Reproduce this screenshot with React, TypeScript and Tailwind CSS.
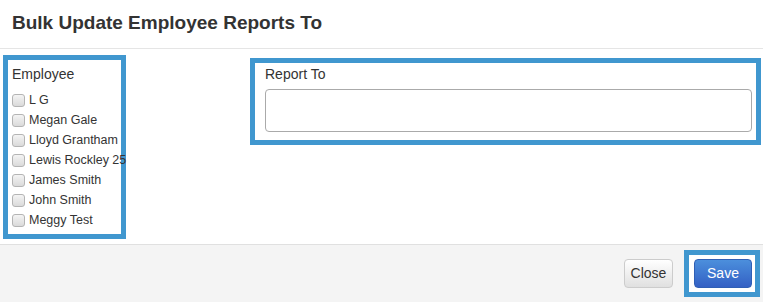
const employees = [
  "L G",
  "Megan Gale",
  "Lloyd Grantham",
  "Lewis Rockley 25",
  "James Smith",
  "John Smith",
  "Meggy Test",
];

function Check() {
  return (
    <span className="inline-block w-[13px] h-[13px] shrink-0 rounded-[3px] border border-[#b4b4b4] bg-gradient-to-b from-[#f4f4f4] to-[#dadada]" />
  );
}

export default function App() {
  return (
    <div className="w-[763px] h-[302px] bg-white text-[#333] font-['Liberation_Sans',Arial,sans-serif] flex flex-col overflow-hidden">
      <div className="h-[49px] border-b border-[#e5e5e5] pl-[12px] pt-[11px]">
        <h4 className="text-[19px] leading-[24px] font-bold">Bulk Update Employee Reports To</h4>
      </div>

      <div className="flex items-start h-[195px]">
        <div className="ml-[3px] mt-[6px] w-[123px] h-[184px] border-[5px] border-[#4097cf] pl-[4px] pt-[4px]">
          <div className="text-[14px] leading-[20px]">Employee</div>
          <div className="mt-[6px] flex flex-col">
            {employees.map((e) => (
              <label key={e} className="flex items-center h-[20px] text-[12.5px] whitespace-nowrap">
                <Check />
                <span className="ml-[4px]">{e}</span>
              </label>
            ))}
          </div>
        </div>

        <div className="ml-[124px] mt-[9px] w-[511px] h-[87px] border-[5px] border-[#4097cf] pl-[10px] pt-[1px]">
          <div className="text-[14px] leading-[20px]">Report To</div>
          <div className="mt-[5px] w-[487px] h-[43px] rounded-[4px] border border-[#aaa] bg-white" />
        </div>
      </div>

      <div className="flex-1 border-t border-[#e0e0e0] bg-[#f4f4f4] flex justify-end items-start pr-[3px] pt-[5px]">
        <button className="mt-[9px] mr-[11px] w-[49px] h-[29px] rounded-[4px] border border-[#ccc] bg-gradient-to-b from-white to-[#e0e0e0] text-[14px] text-[#333]">
          Close
        </button>
        <div className="border-[5px] border-[#4097cf] bg-white pl-[5px] pr-[3px] py-[4px]">
          <button className="w-[58px] h-[29px] rounded-[4px] border border-[#2f5fb5] bg-gradient-to-b from-[#4c8fdc] to-[#3460c4] text-[14px] text-white">
            Save
          </button>
        </div>
      </div>
    </div>
  );
}
